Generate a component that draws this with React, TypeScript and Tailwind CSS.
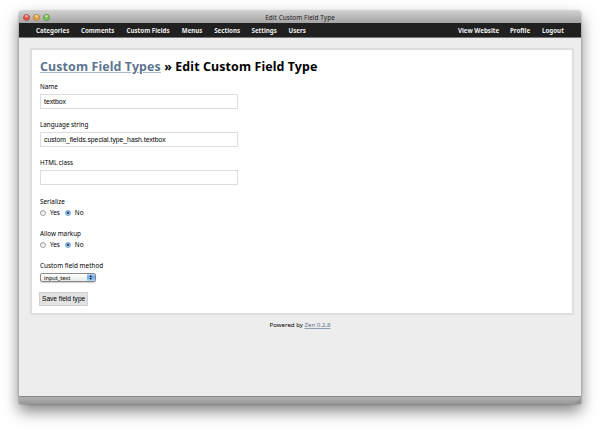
import type { ReactNode } from "react";

function NavItem({ width, children }: { width: string; children: ReactNode }) {
  return <a className={`block whitespace-nowrap ${width}`}>{children}</a>;
}

function TextField({ label, value }: { label: string; value: string }) {
  return (
    <div className="h-[38px] pt-px">
      <label className="block h-[10px] pt-px text-[6.3px] leading-[10px]">{label}</label>
      <div className="mt-[3px] flex h-[15px] w-[197.5px] items-center border border-[#dedede] bg-white pt-px pl-[3px] font-['Liberation_Sans',sans-serif] text-[6.8px] text-black">
        {value}
      </div>
    </div>
  );
}

function Radio({ checked }: { checked?: boolean }) {
  return (
    <span
      className={
        checked
          ? "flex size-[6.4px] items-center justify-center rounded-full border-[0.5px] border-[#6d9bcb] bg-linear-to-b from-[#77a9dc] to-[#b5e2fb]"
          : "flex size-[6.4px] rounded-full border border-[#a0a0a0] bg-linear-to-b from-[#e4e4e4] to-white"
      }
    >
      {checked && <span className="size-[2.2px] rounded-full bg-[#10263f]" />}
    </span>
  );
}

function RadioField({ label }: { label: string }) {
  return (
    <div className="h-[32px]">
      <div className="h-[10px] pt-px text-[6.35px] leading-[10px]">{label}</div>
      <div className="mt-[2px] flex h-[10px] items-center text-[6.4px] leading-[10px]">
        <Radio />
        <span className="ml-[3.5px] w-[15px]">Yes</span>
        <Radio checked />
        <span className="ml-[3.5px]">No</span>
      </div>
    </div>
  );
}

function Light({ color }: { color: string }) {
  return (
    <span className={`relative block size-[7px] overflow-hidden rounded-full border-[0.5px] ${color}`}>
      <span className="absolute top-[0.3px] left-[1.5px] h-[2px] w-[3px] rounded-full bg-white/60" />
    </span>
  );
}

export default function App() {
  return (
    <div className="h-[430px] w-[600px] overflow-hidden bg-white pt-[11px] pl-[19px] font-['Noto_Sans',sans-serif] text-black">
      <div className="flex h-[393px] w-[562px] flex-col overflow-hidden rounded-t-[3px] bg-[#ededed] shadow-[0_7px_15px_rgba(0,0,0,0.5),0_0_2px_rgba(0,0,0,0.4)]">
        <div className="relative flex h-[12px] shrink-0 items-center justify-center bg-linear-to-b from-[#cfcfcf] to-[#a5a5a5] pt-px text-[6.4px] tracking-[0.08px] text-[#222]">
          <div className="absolute top-[2.5px] left-[3.5px] flex gap-[3px]">
            <Light color="border-[#b0504c] bg-[#e8524d]" />
            <Light color="border-[#b5823c] bg-[#f0a545]" />
            <Light color="border-[#5c9045] bg-[#7fc45c]" />
          </div>
          Edit Custom Field Type
        </div>

        <nav className="flex h-[15px] shrink-0 items-center justify-between border-b border-[#777] bg-[#202020] pt-px pr-[18px] pl-[17px] text-[6.2px] leading-[14px] font-bold text-[#eee]">
          <div className="flex">
            <NavItem width="w-[45px]">Categories</NavItem>
            <NavItem width="w-[45.5px]">Comments</NavItem>
            <NavItem width="w-[55.3px]">Custom Fields</NavItem>
            <NavItem width="w-[32.4px]">Menus</NavItem>
            <NavItem width="w-[37.3px]">Sections</NavItem>
            <NavItem width="w-[37px]">Settings</NavItem>
            <NavItem width="w-[20px]">Users</NavItem>
          </div>
          <div className="flex">
            <NavItem width="w-[52px]">View Website</NavItem>
            <NavItem width="w-[32px]">Profile</NavItem>
            <NavItem width="w-[21px]">Logout</NavItem>
          </div>
        </nav>

        <main className="mt-[10px] ml-[11px] h-[267px] w-[544px] shrink-0 rounded-[2px] border-2 border-[#dddddd] bg-white pl-[8px]">
          <h1 className="mt-[7px] h-[20px] text-[12.4px] leading-[20px] font-bold tracking-[0.12px] whitespace-nowrap">
            <a className="text-[#5d7690] underline decoration-[#a9b7c6] decoration-1 underline-offset-[1px]">Custom Field Types</a> » Edit
            Custom Field Type
          </h1>
          <div className="mt-[3px] flex flex-col">
            <TextField label="Name" value="textbox" />
            <TextField label="Language string" value="custom_fields.special.type_hash.textbox" />
            <TextField label="HTML class" value="" />
            <div className="mt-[2px]">
              <RadioField label="Serialize" />
              <RadioField label="Allow markup" />
            </div>
            <div className="h-[10px] pt-px text-[6.4px] leading-[10px]">Custom field method</div>
            <div className="mt-[3px] flex h-[9px] w-[56px] items-stretch overflow-hidden rounded-[2px] border-[0.5px] border-[#8a8a8a] bg-linear-to-b from-white to-[#e8e8e8] text-[5.6px] leading-[8px] shadow-[0_1px_1px_rgba(0,0,0,0.2)]">
              <span className="flex-1 pl-[3px]">input_text</span>
              <span className="flex w-[8px] items-center justify-center bg-linear-to-b from-[#b3d4f4] via-[#66a8e8] to-[#aee0ff]">
                <svg viewBox="0 0 4 6" className="h-[5px] w-[3.4px]" fill="#101c30">
                  <path d="M2 0 3.5 2.3h-3zM2 6 .5 3.7h3z" />
                </svg>
              </span>
            </div>
            <button className="mt-[10px] -ml-px block h-[14px] w-[49px] border border-[#d0d0d0] bg-[#e2e2e2] text-left font-['Liberation_Sans',sans-serif] text-[6.6px] leading-[12px] whitespace-nowrap">
              <span className="pl-[2px]">Save field type</span>
            </button>
          </div>
        </main>

        <footer className="mt-[5px] h-[10px] text-center text-[6.1px] leading-[10px]">
          Powered by <a className="text-[#5d7690] underline decoration-[#8d9fb2]">Zen 0.2.8</a>
        </footer>

        <div className="mt-auto flex h-[8px] shrink-0 items-end justify-end border-t border-[#858585] bg-linear-to-b from-[#b0b0b0] to-[#999]">
          <svg viewBox="0 0 6 6" className="size-[6px]" stroke="#777" strokeWidth=".6">
            <path d="M0 6 6 0M2 6 6 2M4 6 6 4" />
          </svg>
        </div>
      </div>
    </div>
  );
}
